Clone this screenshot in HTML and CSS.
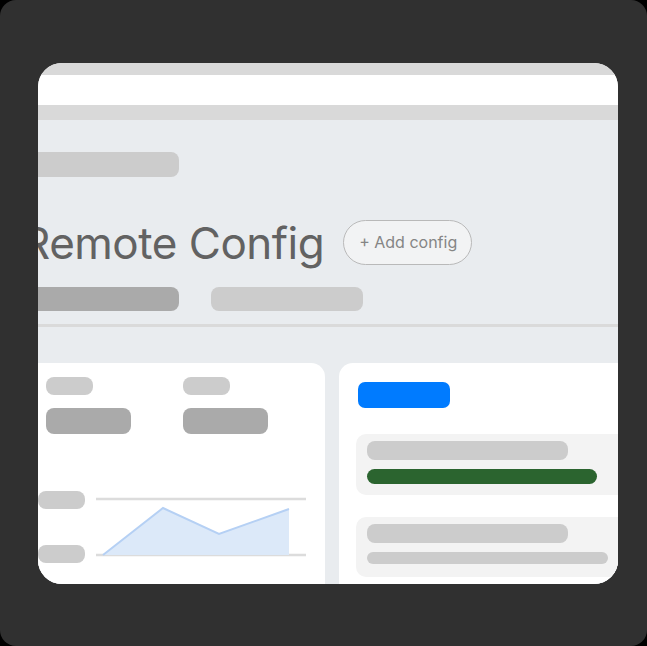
FILE: index.html
```html
<!DOCTYPE html>
<html lang="en">
<head>
    <meta charset="UTF-8">
    <meta name="viewport" content="width=device-width, initial-scale=1.0">
    <title>Remote Config</title>
    <link rel="stylesheet" href="styles.css">
</head>
<body>
    <div class="shell">
        <div class="screen">
            <div class="strip"></div>
            <div class="topbar"></div>
            <div class="strip low"></div>

            <div class="page">
                <div class="head">
                    <div class="bar crumb"></div>
                    <div class="title-row">
                        <h1>Remote Config</h1>
                        <button class="add-btn">+ Add config</button>
                    </div>
                    <div class="tabs">
                        <div class="bar tab dark"></div>
                        <div class="bar tab"></div>
                    </div>
                </div>
                <div class="divider"></div>

                <div class="cards">
                    <!-- stats + chart -->
                    <div class="card stats">
                        <div class="stat-grid">
                            <div class="stat">
                                <div class="bar label"></div>
                                <div class="bar value"></div>
                            </div>
                            <div class="stat">
                                <div class="bar label"></div>
                                <div class="bar value"></div>
                            </div>
                        </div>
                        <div class="chart">
                            <div class="axis">
                                <div class="bar label"></div>
                                <div class="bar label"></div>
                            </div>
                            <svg class="plot" width="214" height="72" viewBox="0 0 214 72">
                                <line x1="0" y1="8" x2="210" y2="8" stroke="#dcdcdc" stroke-width="2.5"/>
                                <line x1="0" y1="64" x2="210" y2="64" stroke="#dcdcdc" stroke-width="2.5"/>
                                <polygon points="7,64 67,17 123,43 193,18 193,64" fill="#dce9f9"/>
                                <polyline points="7,64 67,17 123,43 193,18" fill="none" stroke="#b5d0f4" stroke-width="2"/>
                            </svg>
                        </div>
                    </div>

                    <!-- config list -->
                    <div class="card list">
                        <div class="primary"></div>
                        <div class="item">
                            <div class="bar line"></div>
                            <div class="bar green"></div>
                        </div>
                        <div class="item">
                            <div class="bar line"></div>
                            <div class="bar thin"></div>
                        </div>
                    </div>
                </div>
            </div>
        </div>
    </div>
</body>
</html>
```

FILE: styles.css
```css
* {box-sizing: border-box; margin: 0; padding: 0;}
body {
    background: #000;
    font-family: Inter, 'Noto Sans', sans-serif;
}

.shell {
    width: 647px;
    height: 646px;
    background: #303030;
    border-radius: 16px;
    padding: 63px 29px 62px 38px;
}

.screen {
    width: 580px;
    height: 521px;
    border-radius: 24px;
    overflow: hidden;
    background: #fff;
    display: flex;
    flex-direction: column;
}

.strip {height: 12px; background: #d9d9d9; flex-shrink: 0;}
.strip.low {height: 15px;}
.topbar {height: 30px; background: #fff; flex-shrink: 0;}

.page {
    flex: 1;
    background: #e9ecef;
    padding-top: 32px;
}

.bar {background: #ccc; border-radius: 8px;}

.head {margin-left: -16px;}
.crumb {width: 157px; height: 25px;}

.title-row {
    display: flex;
    align-items: center;
    gap: 19px;
    margin-top: 40px;
}
h1 {
    font-size: 44px;
    line-height: 52px;
    font-weight: 400;
    color: #626262;
    letter-spacing: -0.5px;
}
.add-btn {
    font-family: inherit;
    font-size: 16px;
    color: #858585;
    background: #f2f3f4;
    border: 1px solid #b9b9b9;
    border-radius: 23px;
    height: 45px;
    padding: 0 14px 0 15px;
    margin-top: -2px;
}

.tabs {display: flex; gap: 32px; margin-top: 18px;}
.tab {width: 152px; height: 24px;}
.tab.dark {width: 157px; background: #aaa;}

.divider {height: 3px; background: #dadada; margin-top: 13px;}

.cards {
    display: grid;
    grid-template-columns: 303px 300px;
    gap: 14px;
    margin: 36px 0 0 -16px;
}

.card {
    background: #fff;
    border-radius: 14px;
    height: 260px;
}

.stats {padding: 14px 0 0 24px;}
.stat-grid {display: grid; grid-template-columns: 137px 137px;}
.stat .label {width: 47px; height: 18px;}
.stat .value {width: 85px; height: 26px; margin-top: 13px; background: #aaa;}

.chart {
    display: flex;
    gap: 11px;
    margin: 57px 0 0 -8px;
}
.axis {
    display: flex;
    flex-direction: column;
    justify-content: space-between;
    height: 72px;
}
.axis .label {width: 47px; height: 18px;}

.list {padding: 19px 0 0 17px;}
.primary {
    width: 92px;
    height: 26px;
    margin-left: 2px;
    background: #007bff;
    border-radius: 7px;
}
.item {
    width: 272px;
    background: #f3f3f3;
    border-radius: 10px;
    padding: 7px 0 11px 11px;
    margin-top: 26px;
}
.item + .item {margin-top: 22px; padding-bottom: 13px;}
.item .line {width: 201px; height: 19px;}
.green {width: 230px; height: 15px; margin-top: 9px; background: #2b642f;}
.thin {width: 241px; height: 12px; margin-top: 9px;}
```
